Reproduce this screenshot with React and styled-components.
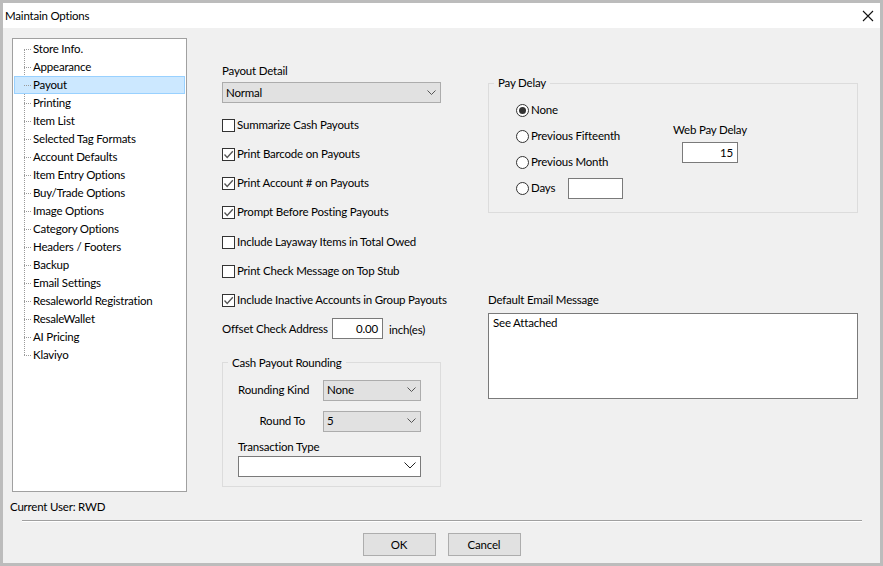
import React from "react";
import styled, { createGlobalStyle } from "styled-components";

const Global = createGlobalStyle`
  html, body { margin: 0; padding: 0; background: #f0f0f0; }
  body { font-family: Lato, Roboto, sans-serif; font-size: 11.5px; letter-spacing: -0.2px; color: #000; }
  * { box-sizing: border-box; }
`;

const Window = styled.div`
  width: 883px; height: 566px; border: 3px solid #bcbcbc;
  background: #f0f0f0; display: flex; flex-direction: column; overflow: hidden;
`;
const TitleBar = styled.div`
  height: 25px; flex: none; background: #fff; display: flex; align-items: center;
  justify-content: space-between; padding: 0 6px 0 2px;
`;
const Body = styled.div`
  height: 468px; flex: none; display: flex; padding: 10px 0 0 9px;
`;
const Tree = styled.div`
  width: 175px; height: 454px; flex: none; border: 1px solid #a0a0a0; background: #fff;
  padding: 1px; position: relative;
`;
const TreeLine = styled.div`
  position: absolute; left: 11px; top: 10px; height: 306px; border-left: 1px dotted #9a9a9a;
`;
const TreeRow = styled.div`
  height: 18px; display: flex; align-items: center; padding: 0 0 2px 18px; position: relative;
  border: 1px solid ${p => (p.$selected ? "#99d1ff" : "transparent")};
  background: ${p => (p.$selected ? "#cce8ff" : "transparent")};
  &::before {
    content: ""; position: absolute; left: 9px; top: 8px; width: 7px; border-top: 1px dotted #9a9a9a;
  }
`;
const Center = styled.div`
  width: 219px; flex: none; margin-left: 35px; padding-top: 26px; display: flex; flex-direction: column;
`;
const Label = styled.div`
  line-height: 14px; white-space: nowrap;
`;
const Select = styled.div`
  height: 21px; width: ${p => p.$w}px; flex: none; display: flex; align-items: center; justify-content: space-between;
  padding: 0 4px 1px 3px; border: 1px solid ${p => (p.$white ? "#7a7a7a" : "#acacac")};
  background: ${p => (p.$white ? "#fff" : "#e1e1e1")};
`;
const DetailSelect = styled(Select)`
  margin-top: 4px;
`;
const Checks = styled.div`
  margin-top: 15px; display: flex; flex-direction: column; gap: 15.33px;
`;
const CheckRow = styled.div`
  height: 14px; display: flex; align-items: center; gap: 2px; white-space: nowrap;
`;
const CheckText = styled.span`
  margin-top: -2px;
`;
const Box = styled.span`
  width: 13px; height: 13px; flex: none; border: 1px solid #333; background: #fff;
  display: flex; align-items: center; justify-content: center;
`;
const OffsetRow = styled.div`
  margin-top: 10px; height: 21px; display: flex; align-items: center;
`;
const OffsetLabel = styled(Label)`
  width: 110px; flex: none; padding-top: 2px;
`;
const Input = styled.div`
  height: 21px; width: ${p => p.$w}px; flex: none; border: 1px solid #7a7a7a; background: #fff;
  display: flex; align-items: center; justify-content: flex-end; padding-right: 4px;
`;
const Unit = styled.span`
  margin-left: 6px; padding-top: 2px;
`;
const Group = styled.fieldset`
  margin: 0; padding: 0; border: 1px solid #dcdcdc; min-width: 0; position: relative;
  width: ${p => p.$w}px; height: ${p => p.$h}px;
`;
const Legend = styled.legend`
  padding: 0 4px; line-height: 14px;
`;
const RoundGroup = styled(Group)`
  margin-top: 17px; padding: 10px 0 0 15px;
`;
const RoundLegend = styled(Legend)`
  margin-left: -10px;
`;
const FormRow = styled.div`
  display: grid; grid-template-columns: 67px 98px; column-gap: 18px; align-items: center;
  margin-bottom: 10px;
`;
const RowLabel = styled(Label)`
  text-align: ${p => (p.$right ? "right" : "left")};
`;
const TxLabel = styled(Label)`
  margin-top: -2px; margin-bottom: 2px;
`;
const Right = styled.div`
  width: 370px; flex: none; margin-left: 47px; padding-top: 45px; display: flex; flex-direction: column;
`;
const DelayGroup = styled(Group)`
  display: flex; padding-left: 27px;
`;
const DelayLegend = styled(Legend)`
  position: absolute; left: 5px; top: -8px; background: #f0f0f0;
`;
const Radios = styled.div`
  width: 166px; flex: none; padding-top: 13px; display: flex; flex-direction: column;
`;
const RadioRow = styled.div`
  height: ${p => p.$h || 26}px; display: flex; align-items: center; gap: 2px; white-space: nowrap;
`;
const Radio = styled.span`
  width: 13px; height: 13px; flex: none; border-radius: 50%; border: 1px solid #333; background: #fff;
  display: flex; align-items: center; justify-content: center;
  &::after {
    content: ""; width: 7px; height: 7px; border-radius: 50%;
    background: ${p => (p.$on ? "#333" : "transparent")};
  }
`;
const RadioText = styled.span`
  width: ${p => (p.$fixed ? "35px" : "auto")}; margin-top: -2px;
`;
const WebDelay = styled.div`
  padding-top: 39px; display: flex; flex-direction: column; align-items: center; width: 56px;
`;
const WebLabel = styled(Label)`
  margin-bottom: 5px;
`;
const EmailLabel = styled(Label)`
  margin-top: 80px; margin-bottom: 6px;
`;
const TextArea = styled.div`
  width: 370px; height: 86px; border: 1px solid #7a7a7a; background: #fff; padding: 2px 4px; line-height: 14px;
`;
const Status = styled.div`
  height: 24px; padding: 4px 0 0 7px; line-height: 14px; flex: none;
`;
const Rule = styled.div`
  margin-left: 19px; width: 840px; height: 2px; flex: none; background: #a0a0a0; border-bottom: 1px solid #fff;
`;
const Buttons = styled.div`
  display: flex; justify-content: center; gap: 12px; padding-top: 11px;
`;
const Button = styled.div`
  width: 73px; height: 23px; background: #e1e1e1; border: 1px solid #adadad;
  display: flex; align-items: center; justify-content: center;
`;
const Close = styled.svg`
  width: 12px; height: 12px; display: block;
`;

const Chevron = ({ dark }) => (
  <svg width={dark ? 12 : 9} height={dark ? 7 : 5} viewBox={dark ? "0 0 12 7" : "0 0 9 5"} fill="none">
    <path d={dark ? "M.5 .5L6 6 11.5 .5" : "M.5 .5L4.5 4.5 8.5 .5"} stroke={dark ? "#222" : "#555"} strokeWidth="1" />
  </svg>
);
const Check = ({ label, on }) => (
  <CheckRow>
    <Box>
      {on && (
        <svg width="11" height="11" viewBox="0 0 11 11" fill="none">
          <path d="M1.5 5.5L4.2 8.5 9.8 2.2" stroke="#555" strokeWidth="1.3" />
        </svg>
      )}
    </Box>
    <CheckText>{label}</CheckText>
  </CheckRow>
);

const items = ["Store Info.", "Appearance", "Payout", "Printing", "Item List", "Selected Tag Formats", "Account Defaults", "Item Entry Options", "Buy/Trade Options", "Image Options", "Category Options", "Headers / Footers", "Backup", "Email Settings", "Resaleworld Registration", "ResaleWallet", "AI Pricing", "Klaviyo"];
const checks = [["Summarize Cash Payouts", false], ["Print Barcode on Payouts", true], ["Print Account # on Payouts", true], ["Prompt Before Posting Payouts", true], ["Include Layaway Items in Total Owed", false], ["Print Check Message on Top Stub", false], ["Include Inactive Accounts in Group Payouts", true]];

export default function App() {
  return (
    <>
      <Global />
      <Window>
        <TitleBar>
          Maintain Options
          <Close viewBox="0 0 12 12" fill="none"><path d="M1 1l10 10M11 1L1 11" stroke="#111" strokeWidth="1.1" /></Close>
        </TitleBar>
        <Body>
          <Tree>
            <TreeLine />
            {items.map(t => <TreeRow key={t} $selected={t === "Payout"}>{t}</TreeRow>)}
          </Tree>
          <Center>
            <Label>Payout Detail</Label>
            <DetailSelect $w={219}>Normal<Chevron /></DetailSelect>
            <Checks>{checks.map(([l, on]) => <Check key={l} label={l} on={on} />)}</Checks>
            <OffsetRow>
              <OffsetLabel>Offset Check Address</OffsetLabel>
              <Input $w={51}>0.00</Input>
              <Unit>inch(es)</Unit>
            </OffsetRow>
            <RoundGroup $w={219} $h={131}>
              <RoundLegend>Cash Payout Rounding</RoundLegend>
              <FormRow><RowLabel>Rounding Kind</RowLabel><Select $w={98}>None<Chevron /></Select></FormRow>
              <FormRow><RowLabel $right>Round To</RowLabel><Select $w={98}>5<Chevron /></Select></FormRow>
              <TxLabel>Transaction Type</TxLabel>
              <Select $w={183} $white><span /><Chevron dark /></Select>
            </RoundGroup>
          </Center>
          <Right>
            <DelayGroup $w={370} $h={130}>
              <DelayLegend>Pay Delay</DelayLegend>
              <Radios>
                <RadioRow><Radio $on /><RadioText>None</RadioText></RadioRow>
                <RadioRow><Radio /><RadioText>Previous Fifteenth</RadioText></RadioRow>
                <RadioRow><Radio /><RadioText>Previous Month</RadioText></RadioRow>
                <RadioRow $h={27}><Radio /><RadioText $fixed>Days</RadioText><Input $w={55} /></RadioRow>
              </Radios>
              <WebDelay>
                <WebLabel>Web Pay Delay</WebLabel>
                <Input $w={56}>15</Input>
              </WebDelay>
            </DelayGroup>
            <EmailLabel>Default Email Message</EmailLabel>
            <TextArea>See Attached</TextArea>
          </Right>
        </Body>
        <Status>Current User: RWD</Status>
        <Rule />
        <Buttons>
          <Button>OK</Button>
          <Button>Cancel</Button>
        </Buttons>
      </Window>
    </>
  );
}
